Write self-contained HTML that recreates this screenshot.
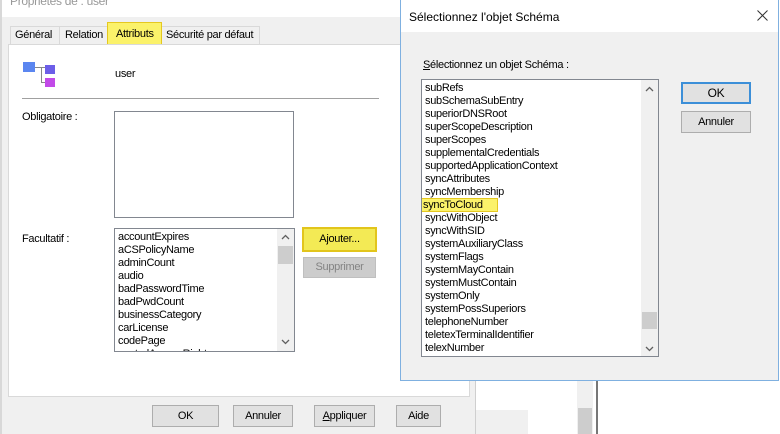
<!DOCTYPE html>
<html><head><meta charset="utf-8"><style>
*{margin:0;padding:0;box-sizing:border-box}
body{width:780px;height:434px;overflow:hidden;background:#fff;font-family:"Liberation Sans",sans-serif;font-size:11px;color:#000;position:relative;letter-spacing:-0.3px}
.a{position:absolute}
.list div{height:13px;line-height:13px;white-space:nowrap}
.btn{position:absolute;background:#e1e1e1;border:1px solid #adadad;text-align:center}
</style></head><body>
<div class="a" style="left:0;top:0;width:476px;height:434px;background:#f0f0f0;border-left:2px solid #d8d8d8;border-right:1px solid #cfcfcf"></div>
<div class="a" style="left:2px;top:0;width:473px;height:17px;background:#fff"></div>
<div class="a" style="left:10px;top:-6px;color:#999;font-size:12px">Propriétés de : user</div>
<div class="a" style="left:10px;top:26px;width:250px;height:19px;border:1px solid #d9d9d9;border-bottom:none;background:#f0f0f0"></div>
<div class="a" style="left:15px;top:29px">Général</div>
<div class="a" style="left:59px;top:26px;width:1px;height:18px;background:#d9d9d9"></div>
<div class="a" style="left:65px;top:29px">Relation</div>
<div class="a" style="left:107px;top:22px;width:55px;height:25px;background:#fbf26a;border:1px solid #e5c820"></div>
<div class="a" style="left:116px;top:28px">Attributs</div>
<div class="a" style="left:166px;top:29px">Sécurité par défaut</div>
<div class="a" style="left:8px;top:44px;width:462px;height:353px;background:#fff;border:1px solid #d9d9d9"></div>
<div class="a" style="left:23px;top:62px;width:12px;height:10px;background:#5b86f0"></div>
<div class="a" style="left:35px;top:67px;width:10px;height:1px;background:#888"></div>
<div class="a" style="left:41px;top:67px;width:1px;height:16px;background:#888"></div>
<div class="a" style="left:41px;top:82px;width:4px;height:1px;background:#888"></div>
<div class="a" style="left:45px;top:65px;width:10px;height:9px;background:#6c5ee8"></div>
<div class="a" style="left:45px;top:78px;width:10px;height:9px;background:#c24ae8"></div>
<div class="a" style="left:115px;top:68px">user</div>
<div class="a" style="left:22px;top:98px;width:357px;height:1px;background:#a0a0a0"></div>
<div class="a" style="left:22px;top:111px">Obligatoire :</div>
<div class="a" style="left:114px;top:111px;width:180px;height:107px;border:1px solid #828790;background:#fff"></div>
<div class="a" style="left:22px;top:233px">Facultatif :</div>
<div class="a" style="left:114px;top:228px;width:181px;height:124px;border:1px solid #828790;background:#fff;overflow:hidden">
 <div class="list a" style="left:3px;top:2px">
 <div>accountExpires</div><div>aCSPolicyName</div><div>adminCount</div><div>audio</div><div>badPasswordTime</div><div>badPwdCount</div><div>businessCategory</div><div>carLicense</div><div>codePage</div><div>controlAccessRights</div></div>
 <div class="a" style="right:0;top:0;width:17px;height:122px;background:#f0f0f0"></div>
 <div class="a" style="right:1px;top:17px;width:15px;height:18px;background:#cdcdcd"></div>
 <svg class="a" style="right:4px;top:5px" width="9" height="6"><path d="M1 5L4.5 1.5L8 5" fill="none" stroke="#606060" stroke-width="1.3"/></svg>
 <svg class="a" style="right:4px;top:110px" width="9" height="6"><path d="M1 1L4.5 4.5L8 1" fill="none" stroke="#606060" stroke-width="1.3"/></svg>
</div>
<div class="btn" style="left:302px;top:227px;width:75px;height:25px;background:#f3ea55;border:2px solid #e2c51c;line-height:21px">Ajouter...</div>
<div class="btn" style="left:303px;top:257px;width:73px;height:21px;background:#cccccc;border-color:#bfbfbf;color:#838383;line-height:19px">Supprimer</div>
<div class="btn" style="left:152px;top:405px;width:67px;height:22px;line-height:20px">OK</div>
<div class="btn" style="left:233px;top:405px;width:60px;height:22px;line-height:20px">Annuler</div>
<div class="btn" style="left:314px;top:405px;width:61px;height:22px;line-height:20px"><u>A</u>ppliquer</div>
<div class="btn" style="left:396px;top:405px;width:45px;height:22px;line-height:20px">Aide</div>
<div class="a" style="left:476px;top:410px;width:52px;height:24px;background:#f0f0f0"></div>
<div class="a" style="left:577px;top:380px;width:16px;height:54px;background:#f0f0f0"></div>
<div class="a" style="left:578px;top:408px;width:14px;height:26px;background:#cdcdcd"></div>
<div class="a" style="left:596px;top:380px;width:2px;height:54px;background:#777"></div>
<div class="a" style="left:400px;top:0;width:379px;height:381px;background:#f0f0f0;border:1px solid #7fb0e0"></div>
<div class="a" style="left:401px;top:0;width:377px;height:32px;background:#fff"></div>
<div class="a" style="left:409px;top:10px;font-size:12px;letter-spacing:0">Sélectionnez l'objet Schéma</div>
<svg class="a" style="left:757px;top:10px" width="11" height="11"><path d="M0.5 0.5L10.5 10.5M10.5 0.5L0.5 10.5" stroke="#333" stroke-width="1"/></svg>
<div class="a" style="left:423px;top:59px"><u>S</u>électionnez un objet Schéma :</div>
<div class="a" style="left:421px;top:79px;width:238px;height:278px;border:1px solid #828790;background:#fff;overflow:hidden">
 <div class="list a" style="left:3px;top:2px">
 <div>subRefs</div><div>subSchemaSubEntry</div><div>superiorDNSRoot</div><div>superScopeDescription</div><div>superScopes</div><div>supplementalCredentials</div><div>supportedApplicationContext</div><div>syncAttributes</div><div>syncMembership</div><div><span style="background:#fbf26a;outline:1px solid #e5c820;padding:0 14px 0 1px;margin-left:-3px">syncToCloud</span></div><div>syncWithObject</div><div>syncWithSID</div><div>systemAuxiliaryClass</div><div>systemFlags</div><div>systemMayContain</div><div>systemMustContain</div><div>systemOnly</div><div>systemPossSuperiors</div><div>telephoneNumber</div><div>teletexTerminalIdentifier</div><div>telexNumber</div><div>textEncodedORAddress</div></div>
 <div class="a" style="right:0;top:0;width:17px;height:276px;background:#f0f0f0"></div>
 <div class="a" style="right:1px;top:232px;width:15px;height:17px;background:#cdcdcd"></div>
 <svg class="a" style="right:4px;top:6px" width="9" height="6"><path d="M1 5L4.5 1.5L8 5" fill="none" stroke="#606060" stroke-width="1.3"/></svg>
 <svg class="a" style="right:4px;top:266px" width="9" height="6"><path d="M1 1L4.5 4.5L8 1" fill="none" stroke="#606060" stroke-width="1.3"/></svg>
</div>
<div class="btn" style="left:681px;top:82px;width:70px;height:22px;border:2px solid #3c8fd8;line-height:18px;font-size:12px">OK</div>
<div class="btn" style="left:681px;top:111px;width:70px;height:22px;line-height:20px">Annuler</div>
</body></html>
